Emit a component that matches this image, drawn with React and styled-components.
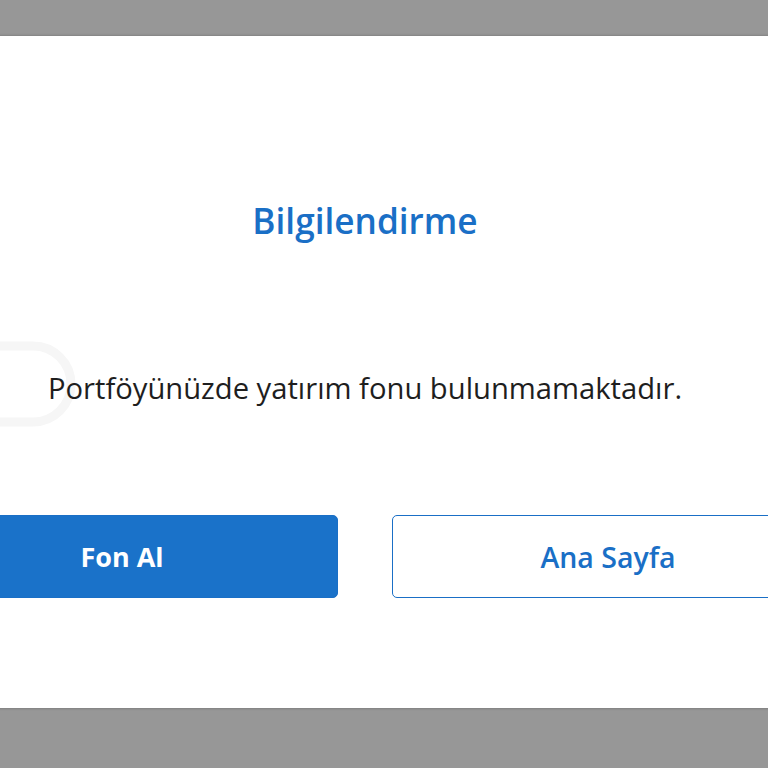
import React from 'react';
import styled, { createGlobalStyle } from 'styled-components';

const GlobalStyle = createGlobalStyle`
  html, body {
    margin: 0;
    padding: 0;
    background: #979797;
  }
  body {
    font-family: 'Open Sans', 'Noto Sans', sans-serif;
  }
`;

const Backdrop = styled.div`
  width: 768px;
  height: 768px;
  overflow: hidden;
  background: #979797;
  padding-top: 36px;
  box-sizing: border-box;
`;

const Dialog = styled.div`
  position: relative;
  width: 1050px;
  height: 672px;
  margin-left: -160px;
  background: #ffffff;
  box-shadow: 0 -1px 2px rgba(0, 0, 0, 0.12), 0 1px 2px rgba(0, 0, 0, 0.15);
  display: flex;
  flex-direction: column;
  align-items: center;
  box-sizing: border-box;
  padding-top: 161px;
`;

const Title = styled.h2`
  margin: 0;
  font-size: 35.2px;
  font-weight: 600;
  color: #1a6fc6;
  line-height: 46px;
`;

const Message = styled.p`
  position: relative;
  margin: 125px 0 0;
  font-size: 29.2px;
  font-weight: 500;
  color: #1e1e1e;
  line-height: 40px;
`;

const Actions = styled.div`
  display: flex;
  gap: 54px;
  margin-top: 107px;
`;

const ActionButton = styled.button`
  width: 432px;
  height: 83px;
  border-radius: 5px;
  font-family: 'Open Sans', 'Noto Sans', sans-serif;
  font-size: ${p => (p.primary ? '27px' : '28.5px')};
  font-weight: ${p => (p.primary ? 700 : 600)};
  cursor: pointer;
  border: 1.5px solid #1a6fc6;
  background: ${p => (p.primary ? '#1a72c9' : '#ffffff')};
  color: ${p => (p.primary ? '#ffffff' : '#1a6fc6')};
`;

/* faint outline of the pill peeking from behind the message */
const Ring = styled.svg`
  position: absolute;
  left: 143px;
  top: 302px;
`;

export default function App() {
  return (
    <>
      <GlobalStyle />
      <Backdrop>
        <Dialog>
          <Ring width="120" height="100" viewBox="0 0 120 100">
            <path
              d="M0 8 H50 A38 38 0 0 1 50 84 H0"
              fill="none"
              stroke="#f6f6f6"
              strokeWidth="9"
            />
          </Ring>
          <Title>Bilgilendirme</Title>
          <Message>Portföyünüzde yatırım fonu bulunmamaktadır.</Message>
          <Actions>
            <ActionButton primary>Fon Al</ActionButton>
            <ActionButton>Ana Sayfa</ActionButton>
          </Actions>
        </Dialog>
      </Backdrop>
    </>
  );
}
